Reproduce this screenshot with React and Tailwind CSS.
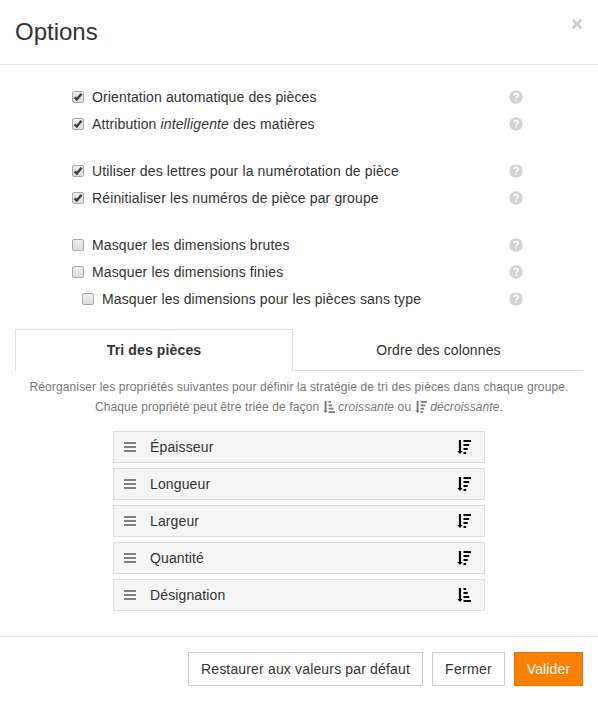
import { useState } from 'react'

const options = [
  [
    { id: 'auto', label: 'Orientation automatique des pièces', checked: true },
    { id: 'smart', label: <>Attribution <em>intelligente</em> des matières</>, checked: true },
  ],
  [
    { id: 'letters', label: 'Utiliser des lettres pour la numérotation de pièce', checked: true },
    { id: 'reset', label: 'Réinitialiser les numéros de pièce par groupe', checked: true },
  ],
  [
    { id: 'raw', label: 'Masquer les dimensions brutes', checked: false },
    { id: 'final', label: 'Masquer les dimensions finies', checked: false },
    { id: 'untyped', label: 'Masquer les dimensions pour les pièces sans type', checked: false, indent: true },
  ],
]

const properties = [
  { name: 'Épaisseur', asc: false },
  { name: 'Longueur', asc: false },
  { name: 'Largeur', asc: false },
  { name: 'Quantité', asc: false },
  { name: 'Désignation', asc: true },
]

function SortIcon({ asc, className }) {
  return (
    <svg viewBox="0 0 14 14" className={className} fill="currentColor">
      <path d="M1.9 0h2.2v11h1.6L3 14 .3 11h1.6z" />
      {asc ? (
        <path d="M6.5 0h2.7v2H6.5zM6.5 4h4.2v2H6.5zM6.5 8h5.7v2H6.5zM6.5 12H14v2H6.5z" />
      ) : (
        <path d="M6.5 0H14v2H6.5zM6.5 4h5.7v2H6.5zM6.5 8h4.2v2H6.5zM6.5 12h2.7v2H6.5z" />
      )}
    </svg>
  )
}

function HelpIcon() {
  return (
    <svg viewBox="0 0 14 14" className="w-3.5 h-3.5">
      <circle cx="7" cy="7" r="6.7" fill="#d3d3d3" />
      <path d="M4.9 5.4C5 3.9 6 3.4 7 3.4c1.2 0 2.1.7 2.1 1.8 0 1.5-1.9 1.5-1.9 3" fill="none" stroke="#fff" strokeWidth="1.5" />
      <path d="M6.3 9.3h1.6v1.5H6.3z" fill="#fff" />
    </svg>
  )
}

function Checkbox({ checked, onClick }) {
  return (
    <button
      type="button"
      role="checkbox"
      aria-checked={checked}
      onClick={onClick}
      className="w-3 h-3 mr-2 shrink-0 rounded-[2px] border border-[#a9a9a9] bg-linear-to-b from-[#eeeeee] to-[#dcdcdc]"
    >
      {checked && (
        <svg viewBox="0 0 10 10" className="block w-2.5 h-2.5">
          <path d="M1.6 5.3 3.8 7.5 8.5 1.8" fill="none" stroke="#404040" strokeWidth="2.5" />
        </svg>
      )}
    </button>
  )
}

function OptionRow({ option }) {
  const [checked, setChecked] = useState(option.checked)

  return (
    <div className={option.indent ? 'flex items-center h-[27px] pl-2.5' : 'flex items-center h-[27px]'}>
      <Checkbox checked={checked} onClick={() => setChecked(!checked)} />
      <span className="flex-1 whitespace-nowrap">{option.label}</span>
      <HelpIcon />
    </div>
  )
}

export default function App() {
  return (
    <div className="w-[598px] h-[701px] overflow-hidden bg-[#fefefe] font-['Liberation_Sans',Arial,sans-serif] text-sm leading-5 tracking-[0.13px] text-[#333]">
      <header className="flex justify-between h-[65px] pl-[15px] pr-4 border-b border-[#e5e5e5]">
        <h1 className="pt-4 text-2xl leading-8 tracking-normal">Options</h1>
        <button type="button" aria-label="Close" className="w-2.5 h-2.5 mt-[19px]">
          <svg viewBox="0 0 10 10" className="block w-2.5 h-2.5">
            <path d="M.8.8l8.4 8.4M9.2.8L.8 9.2" stroke="#cbcbcb" strokeWidth="2.5" />
          </svg>
        </button>
      </header>

      <main className="h-[571px] px-[15px] pt-[18px]">
        <div className="flex flex-col gap-5 w-[451px] ml-[57px]">
          {options.map((group, i) => (
            <div key={i}>
              {group.map(option => <OptionRow key={option.id} option={option} />)}
            </div>
          ))}
        </div>

        <div className="flex mt-[17px] h-[42px] text-center leading-[41px]">
          <div className="w-[278px] border border-b-0 border-[#ddd] font-bold">Tri des pièces</div>
          <div className="flex-1 ml-px pt-px border-b border-[#ddd]">Ordre des colonnes</div>
        </div>

        <div className="mt-1.5 text-xs leading-5 tracking-[0.12px] text-center text-[#777] whitespace-nowrap">
          <p>Réorganiser les propriétés suivantes pour définir la stratégie de tri des pièces dans chaque groupe.</p>
          <p>
            Chaque propriété peut être triée de façon <SortIcon asc className="inline w-3 h-3 align-[-2px]" /> <em>croissante</em> ou <SortIcon className="inline w-3 h-3 align-[-2px]" /> <em>décroissante</em>.
          </p>
        </div>

        <ul className="flex flex-col gap-[5px] w-[372px] mt-3.5 ml-[98px]">
          {properties.map(p => (
            <li key={p.name} className="flex items-center h-8 pl-2.5 pr-[13px] border border-[#ddd] bg-[#f5f5f5]">
              <span className="flex flex-col gap-0.5 w-3 mr-3.5">
                <span className="h-0.5 bg-[#808080]" />
                <span className="h-0.5 bg-[#808080]" />
                <span className="h-0.5 bg-[#808080]" />
              </span>
              <span className="flex-1">{p.name}</span>
              <SortIcon asc={p.asc} className="w-3.5 h-3.5 text-black" />
            </li>
          ))}
        </ul>
      </main>

      <footer className="flex justify-end gap-[9px] h-[65px] pt-[15px] pr-[15px] border-t border-[#e5e5e5]">
        <button type="button" className="w-[235px] h-[34px] border border-[#ccc] bg-white tracking-[0.16px] whitespace-nowrap">Restaurer aux valeurs par défaut</button>
        <button type="button" className="w-[73px] h-[34px] border border-[#ccc] bg-white tracking-[0.3px]">Fermer</button>
        <button type="button" className="w-[69px] h-[34px] border border-[#e07400] bg-[#f98000] text-white">Valider</button>
      </footer>
    </div>
  )
}
